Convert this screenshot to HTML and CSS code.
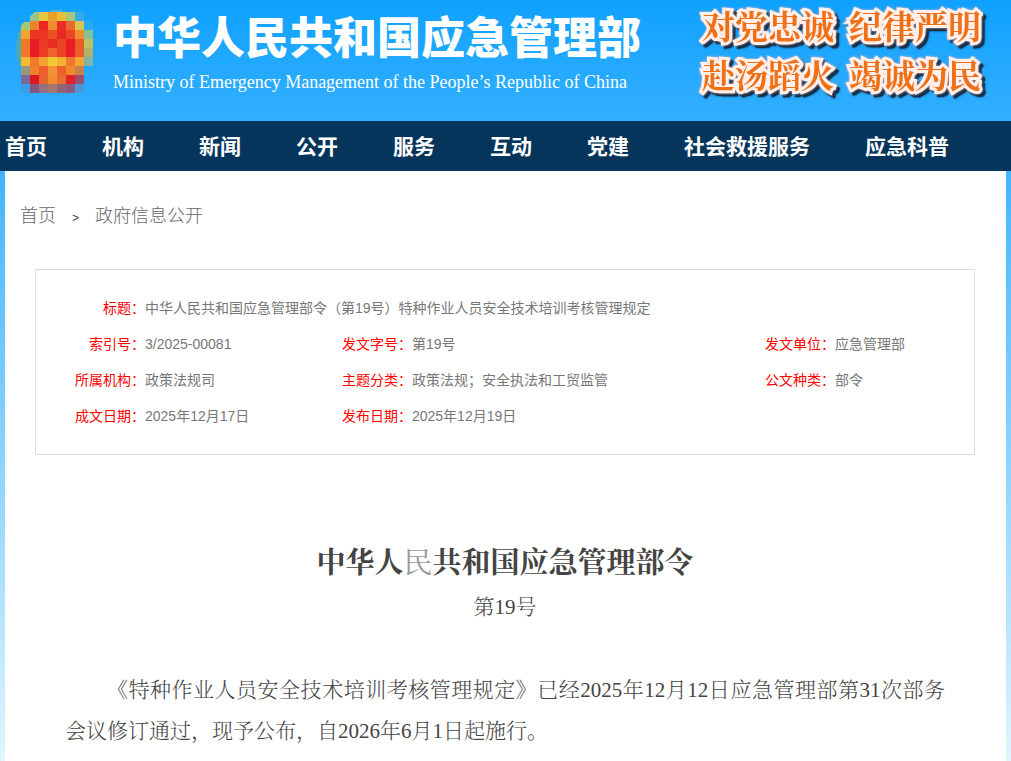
FILE: index.html
```
<!DOCTYPE html>
<html lang="zh-CN">
<head>
<meta charset="utf-8">
<meta name="viewport" content="width=device-width, initial-scale=1">
<title>中华人民共和国应急管理部</title>
<link rel="stylesheet" href="styles.css">
</head>
<body>
<header class="banner wrap">
  <svg class="emblem" viewBox="16 10 78 84" shape-rendering="crispEdges" aria-hidden="true">
    <path d="M21 28h-1v4h-2v6h-1v6h-1v9h1v7h2v6h2z" fill="#4fa9b6"/>
    <path d="M50 12v-2h12v2z" fill="#4aaddc"/>
    <path d="M21 30v-5l3-3h6v8z" fill="#a2c777"/>
    <path d="M30 21v-5l4-4h5v9z" fill="#94c48b"/>
    <path d="M39 12h9v9h-9z" fill="#e5c63d"/><path d="M48 12h9v9h-9z" fill="#eba02b"/><path d="M57 12h9v9h-9z" fill="#e8be37"/><path d="M66 12h9v9h-9z" fill="#abc576"/><path d="M75 12h6l3 3v6h-9z" fill="#37abe8"/>
    <path d="M30 21h9v9h-9z" fill="#ea842b"/><path d="M39 21h9v9h-9z" fill="#ec2726"/><path d="M48 21h9v9h-9z" fill="#f18a31"/><path d="M57 21h9v9h-9z" fill="#eb2d25"/><path d="M66 21h9v9h-9z" fill="#e86829"/><path d="M75 21h9v9h-9z" fill="#d5c652"/><path d="M84 21h7l2 2v7h-9z" fill="#28a9f6"/>
    <path d="M21 30h9v9h-9z" fill="#f0a52e"/><path d="M30 30h9v9h-9z" fill="#eb3426"/><path d="M39 30h9v9h-9z" fill="#eb3422"/><path d="M48 30h9v9h-9z" fill="#eb5222"/><path d="M57 30h9v9h-9z" fill="#ec2825"/><path d="M66 30h9v9h-9z" fill="#eb4824"/><path d="M75 30h9v9h-9z" fill="#ef8c2d"/><path d="M84 30h9v9h-9z" fill="#86c096"/>
    <path d="M21 39h9v9h-9z" fill="#eb7925"/><path d="M30 39h9v9h-9z" fill="#ec1c27"/><path d="M39 39h9v9h-9z" fill="#e93b25"/><path d="M48 39h9v9h-9z" fill="#e92c24"/><path d="M57 39h9v9h-9z" fill="#e94524"/><path d="M66 39h9v9h-9z" fill="#ec1c27"/><path d="M75 39h9v9h-9z" fill="#ec5c25"/><path d="M84 39h9v9h-9z" fill="#bdc361"/>
    <path d="M21 48h9v9h-9z" fill="#ee7928"/><path d="M30 48h9v9h-9z" fill="#ed1b28"/><path d="M39 48h9v9h-9z" fill="#ed3e26"/><path d="M48 48h9v9h-9z" fill="#f1612b"/><path d="M57 48h9v9h-9z" fill="#ed4225"/><path d="M66 48h9v9h-9z" fill="#ed1b28"/><path d="M75 48h9v9h-9z" fill="#ee5d27"/><path d="M84 48h9v9h-9z" fill="#afb36a"/>
    <path d="M21 57h9v9h-9z" fill="#f3bb34"/><path d="M30 57h9v9h-9z" fill="#f1792c"/><path d="M39 57h9v9h-9z" fill="#f4a32e"/><path d="M48 57h9v9h-9z" fill="#f3c832"/><path d="M57 57h9v9h-9z" fill="#f3b32f"/><path d="M66 57h9v9h-9z" fill="#f1762d"/><path d="M75 57h9v9h-9z" fill="#f2a72f"/><path d="M84 57h9v9h-9z" fill="#7fb3a3"/>
    <path d="M21 66h9v9h-9z" fill="#9b967f"/><path d="M30 66h9v9h-9z" fill="#ed812c"/><path d="M39 66h9v9h-9z" fill="#ed5e2c"/><path d="M48 66h9v9h-9z" fill="#ef9333"/><path d="M57 66h9v9h-9z" fill="#ed602c"/><path d="M66 66h9v9h-9z" fill="#ef8b2d"/><path d="M75 66h9v9h-9z" fill="#c88148"/>
    <path d="M21 75h9v9h-9z" fill="#7b6b9b"/><path d="M30 75h9v9h-9z" fill="#e01622"/><path d="M39 75h9v9h-9z" fill="#e36430"/><path d="M48 75h9v9h-9z" fill="#f18b2d"/><path d="M57 75h9v9h-9z" fill="#e66e31"/><path d="M66 75h9v9h-9z" fill="#e22129"/><path d="M75 75h9v9h-9z" fill="#9c4e72"/>
    <path d="M21 84h9v9h-9z" fill="#3d9ee5"/><path d="M30 84h9v9h-9z" fill="#865580"/><path d="M39 84h9v9h-9z" fill="#93717e"/><path d="M48 84h9v9h-9z" fill="#a6776d"/><path d="M57 84h9v9h-9z" fill="#936275"/><path d="M66 84h9v9h-9z" fill="#8c5982"/><path d="M75 84h9v7l-2 2h-7z" fill="#4b98d9"/>
  </svg>
  <div class="brand">
    <div class="brand-name">中华人民共和国应急管理部</div>
    <div class="brand-en" lang="en">Ministry of Emergency Management of the People’s Republic of China</div>
  </div>
  <div class="slogan">
    <span>对党忠诚</span><span>纪律严明</span>
    <span>赴汤蹈火</span><span>竭诚为民</span>
  </div>
</header>
<nav class="nav">
  <div class="nav-list wrap">
    <a href="#">首页</a><a href="#">机构</a><a href="#">新闻</a><a href="#">公开</a><a href="#">服务</a><a href="#">互动</a><a href="#">党建</a><a href="#">社会救援服务</a><a href="#">应急科普</a>
  </div>
</nav>
<main class="page wrap">
  <div class="crumbs"><a href="#">首页</a><span class="crumb-sep">&gt;</span><a href="#">政府信息公开</a></div>
  <div class="meta">
    <table class="meta-table">
      <colgroup><col class="c-first"><col class="c-short"><col class="c-label"><col class="c-long"><col class="c-label"><col></colgroup>
      <tr><th scope="row">标题：</th><td colspan="5">中华人民共和国应急管理部令（第19号）特种作业人员安全技术培训考核管理规定</td></tr>
      <tr><th scope="row">索引号：</th><td>3/2025-00081</td><th scope="row">发文字号：</th><td>第19号</td><th scope="row">发文单位：</th><td>应急管理部</td></tr>
      <tr><th scope="row">所属机构：</th><td>政策法规司</td><th scope="row">主题分类：</th><td>政策法规；安全执法和工贸监管</td><th scope="row">公文种类：</th><td>部令</td></tr>
      <tr><th scope="row">成文日期：</th><td>2025年12月17日</td><th scope="row">发布日期：</th><td>2025年12月19日</td><td></td><td></td></tr>
    </table>
  </div>
  <article class="article">
    <h1 class="title">中华人<span class="title-faint">民</span>共和国应急管理部令</h1>
    <p class="number">第19号</p>
    <p class="body-text">《特种作业人员安全技术培训考核管理规定》已经2025年12月12日应急管理部第31次部务会议修订通过，现予公布，自2026年6月1日起施行。</p>
  </article>
</main>
</body>
</html>
```
FILE: styles.css
```
* {
  box-sizing: border-box;
}

body {
  margin: 0;
  min-height: 100vh;
  display: flex;
  flex-direction: column;
  font-family: "Liberation Sans", "Noto Sans CJK SC", sans-serif;
  background: linear-gradient(#0fa1ff 0, #33afff 120px, #5bbfff 260px, #8ad2ff 450px, #b8e5ff 620px, #e2f5ff 761px);
}

a {
  color: inherit;
  text-decoration: none;
}

.wrap {
  width: 100%;
  max-width: 1001px;
  margin: 0 auto;
}

.banner {
  display: flex;
  align-items: flex-start;
  height: 121px;
  padding: 10px 25px 0 11px;
}

.emblem {
  width: 78px;
  height: 84px;
  flex: none;
}

.brand {
  margin-left: 19px;
  color: #fff;
  white-space: nowrap;
}

.brand-name {
  margin-top: -3px;
  font: 900 44px/56px "Noto Sans CJK SC", sans-serif;
}

.brand-en {
  padding-top: 3px;
  font: 18px/32px "Liberation Serif", serif;
}

.slogan {
  display: grid;
  grid-template-columns: auto auto;
  column-gap: 15px;
  margin-left: auto;
  margin-top: -10px;
  font: 700 33px/49px "Noto Serif CJK SC", "Noto Sans CJK SC", serif;
  white-space: nowrap;
  color: #f07018;
  -webkit-text-stroke: 6px #fff0ec;
  paint-order: stroke fill;
  filter: drop-shadow(0 0 1px #f8b8b4) drop-shadow(3px 3px 0 #12304a);
}

.nav {
  background: #05355b;
}

.nav-list {
  display: flex;
  gap: 55px;
  padding-top: 2px;
  color: #fff;
  font-size: 21px;
  font-weight: 700;
  line-height: 48px;
  white-space: nowrap;
}

.page {
  flex: 1;
  padding: 30px 31px 0 30px;
  background: #fff;
}

.crumbs {
  display: flex;
  gap: 16px;
  margin-left: -15px;
  color: #666;
  font-size: 18px;
  font-weight: 300;
  line-height: 30px;
}

.crumb-sep {
  color: #444;
  font-size: 12px;
  line-height: 34px;
}

.meta {
  margin-top: 34px;
  padding: 20px 0;
  border: 1px solid #ddd;
}

.meta-table {
  width: 100%;
  table-layout: fixed;
  border-collapse: collapse;
  font-size: 14px;
  line-height: 20px;
}

.meta-table th,
.meta-table td {
  height: 36px;
  padding: 0;
  white-space: nowrap;
}

.meta-table th {
  color: #f00;
  font-weight: 400;
  text-align: right;
}

.meta-table td {
  color: #777;
}

.c-first {
  width: 109px;
}

.c-short {
  width: 21%;
}

.c-label {
  width: 70px;
}

.c-long {
  width: 353px;
}

.article {
  padding: 85px 30px 0;
  color: #444;
  font-family: "Liberation Serif", "Noto Serif CJK SC", "Noto Sans CJK SC", serif;
  font-weight: 300;
}

.title {
  margin: 0;
  font-size: 29px;
  font-weight: 700;
  line-height: 46px;
  text-align: center;
}

.title-faint {
  color: #999;
  font-weight: 400;
}

.number {
  margin: 0;
  font-size: 21px;
  line-height: 42px;
  text-align: center;
}

.body-text {
  margin: 42px 0 0;
  font-size: 21px;
  line-height: 41px;
  text-align: justify;
  text-indent: 2em;
}
```
